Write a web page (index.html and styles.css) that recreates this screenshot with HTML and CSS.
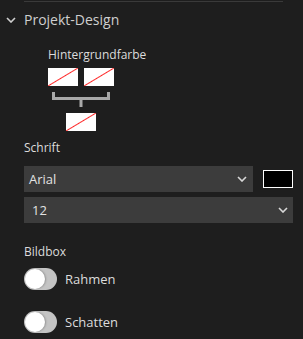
FILE: index.html
```html
<!DOCTYPE html>
<html lang="de">
<head>
    <meta charset="UTF-8">
    <meta name="viewport" content="width=device-width, initial-scale=1.0">
    <title>Projekt-Design</title>
    <link rel="stylesheet" href="styles.css">
</head>
<body>
    <div class="top-line"></div>

    <div class="section-head">
        <svg class="chevron" width="10" height="6" viewBox="0 0 10 6">
            <polyline points="1,1 5,5 9,1" fill="none" stroke="#cfcfcf" stroke-width="1.6"/>
        </svg>
        <span>Projekt-Design</span>
    </div>

    <div class="section-body">
        <div class="bg-group">
            <div class="label">Hintergrundfarbe</div>
            <div class="swatch-row">
                <div class="swatch none"></div>
                <div class="swatch none"></div>
            </div>
            <svg class="bracket" width="66" height="15" viewBox="0 0 66 15">
                <path d="M5.5 0 V6.5 H60.5 V0 M33 6.5 V15" fill="none" stroke="#a9a9a9" stroke-width="3"/>
            </svg>
            <div class="swatch none"></div>
        </div>

        <div class="label font-label">Schrift</div>
        <div class="font-row">
            <div class="select font-select">
                <span>Arial</span>
                <svg width="10" height="6" viewBox="0 0 10 6">
                    <polyline points="1,1 5,5 9,1" fill="none" stroke="#d8d8d8" stroke-width="1.6"/>
                </svg>
            </div>
            <div class="swatch black"></div>
        </div>
        <div class="select size-select">
            <span>12</span>
            <svg width="10" height="6" viewBox="0 0 10 6">
                <polyline points="1,1 5,5 9,1" fill="none" stroke="#d8d8d8" stroke-width="1.6"/>
            </svg>
        </div>

        <div class="label box-label">Bildbox</div>
        <div class="toggle-row first">
            <div class="toggle"><div class="knob"></div></div>
            <span>Rahmen</span>
        </div>
        <div class="toggle-row">
            <div class="toggle"><div class="knob"></div></div>
            <span>Schatten</span>
        </div>
    </div>
</body>
</html>
```

FILE: styles.css
```css
* {
    margin: 0;
    padding: 0;
    box-sizing: border-box;
}

body {
    background-color: #1e1e1e;
    color: #dcdcdc;
    font-family: "Open Sans", "Noto Sans", sans-serif;
    font-size: 12px;
    padding-top: 1px;
}

.top-line {
    margin-left: 24px;
    width: 259px;
    height: 1px;
    background-color: #3a3a3a;
}

.section-head {
    height: 34px;
    display: flex;
    align-items: center;
    padding-left: 6px;
    color: #cfcfcf;
    font-size: 14px;
}

.chevron {
    margin-right: 8px;
    margin-top: 2px;
}

.section-body {
    padding-left: 24px;
}

.label {
    line-height: 16px;
}

.bg-group {
    margin-left: 24px;
    width: 66px;
    display: flex;
    flex-direction: column;
    align-items: center;
}

.bg-group .label {
    margin-top: 11px;
    white-space: nowrap;
    align-self: flex-start;
}

.swatch-row {
    display: flex;
    gap: 6px;
    margin-top: 5px;
}

.bracket {
    display: block;
    margin: 6px 0;
}

.swatch {
    width: 30px;
    height: 18px;
}

.swatch.none {
    background: linear-gradient(to bottom right, #ffffff calc(50% - 1px), #ff2b2b 50%, #ffffff calc(50% + 1px));
}

.swatch.black {
    background-color: #000;
    border: 1px solid #fff;
}

.font-label {
    margin-top: 9px;
}

.font-row {
    display: flex;
    align-items: center;
    gap: 10px;
    margin-top: 10px;
}

.select {
    height: 26px;
    background-color: #3c3c3c;
    display: flex;
    align-items: center;
    justify-content: space-between;
    color: #e2e2e2;
    font-size: 13px;
}

.font-select {
    width: 229px;
    padding: 0 6px 0 5px;
}

.size-select {
    width: 269px;
    margin-top: 5px;
    padding: 0 5px 0 8px;
}

.box-label {
    margin-top: 21px;
}

.toggle-row {
    display: flex;
    align-items: center;
    gap: 8px;
    height: 22px;
    margin-top: 21px;
    font-size: 13px;
}

.toggle-row.first {
    margin-top: 8px;
}

.toggle {
    width: 33px;
    height: 22px;
    border-radius: 11px;
    background-color: #c4c4c4;
    padding: 1px;
}

.knob {
    width: 20px;
    height: 20px;
    border-radius: 50%;
    background-color: #fff;
    box-shadow: 1px 0 2px rgba(0,0,0,0.25);
}
```
